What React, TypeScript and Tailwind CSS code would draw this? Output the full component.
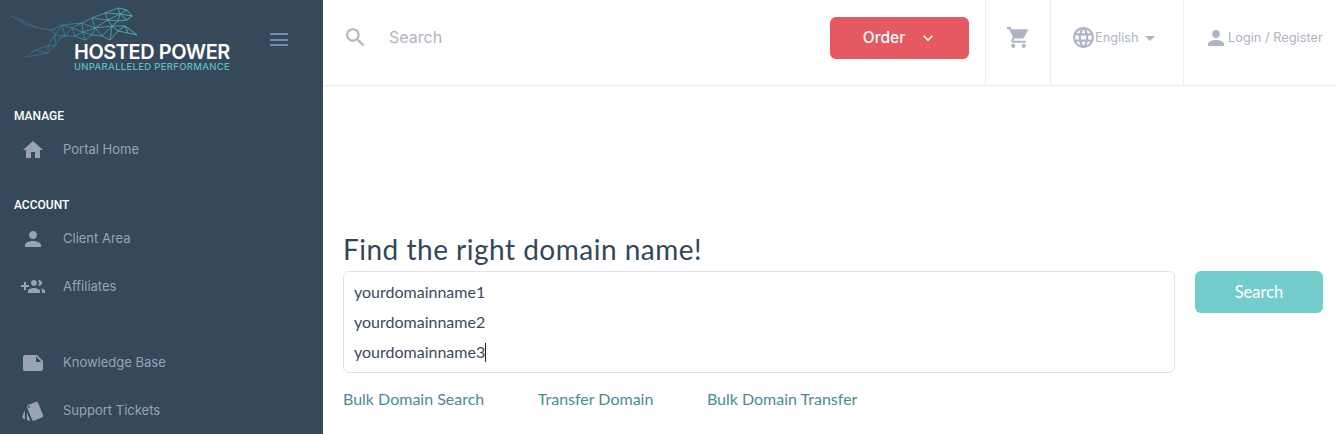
import { ReactNode } from "react";
import {
  MdHome,
  MdKeyboardArrowDown,
  MdArrowDropDown,
  MdLanguage,
  MdNote,
  MdPerson,
  MdSearch,
  MdShoppingCart,
  MdStyle,
} from "react-icons/md";

// wireframe points of the logo's cat
const nodes: [number, number][] = [
  [11, 16], [22, 20], [38, 28], [52, 30], [62, 25], [82, 23], [92, 18], [105, 13], [118, 8], [127, 10], [132, 16], [127, 20],
  [118, 21], [112, 26], [125, 26], [137, 35], [128, 33], [118, 31], [110, 40], [102, 36], [92, 35], [85, 40], [75, 36], [65, 36],
  [55, 35], [48, 46], [35, 50], [25, 57], [32, 56], [48, 53], [55, 46], [72, 28], [95, 28], [108, 20], [120, 14], [83, 32],
  [60, 38], [25, 24],
];

const links: [number, number][] = [
  [0, 1], [1, 2], [2, 3], [3, 4], [4, 5], [5, 6], [6, 7], [7, 8], [8, 9], [9, 10], [10, 11], [11, 12], [12, 13], [13, 14], [14, 15], [15, 16],
  [16, 17], [17, 18], [18, 19], [19, 20], [20, 21], [21, 22], [22, 23], [23, 24], [24, 25], [25, 26], [26, 27], [27, 28], [28, 29], [29, 30],
  [0, 37], [37, 2], [1, 37], [25, 30], [30, 36], [36, 23], [24, 30], [3, 24], [4, 24], [4, 23], [4, 31], [5, 31], [31, 23], [31, 22], [31, 35],
  [5, 35], [35, 22], [35, 21], [35, 20], [35, 32], [5, 32], [6, 32], [32, 20], [32, 19], [32, 33], [6, 33], [7, 33], [33, 13], [32, 13], [13, 19],
  [13, 18], [13, 17], [33, 12], [33, 34], [7, 34], [8, 34], [9, 34], [10, 34], [11, 34], [12, 34], [14, 17], [14, 16], [26, 29], [25, 29],
];

function GroupAddIcon() {
  return (
    <svg width="24" height="24" viewBox="0 0 24 24" fill="currentColor">
      <path d="M8 10H5V7H3v3H0v2h3v3h2v-3h3v-2zm10 1c1.66 0 2.99-1.34 2.99-3S19.66 5 18 5c-.32 0-.63.05-.91.14.57.81.9 1.79.9 2.86s-.34 2.04-.9 2.86c.28.09.59.14.91.14zm-5 0c1.66 0 2.99-1.34 2.99-3S14.66 5 13 5s-3 1.34-3 3 1.34 3 3 3zm6.62 2.16c.83.73 1.38 1.66 1.38 2.84v2h3v-2c0-1.54-2.37-2.49-4.38-2.84zM13 13c-2 0-6 1-6 3v2h12v-2c0-2-4-3-6-3z" />
    </svg>
  );
}

function Logo() {
  return (
    <div className="relative w-[231px] h-[86px] pl-[74px] pt-[42px]">
      <svg className="absolute left-0 top-0" width="150" height="62" viewBox="0 0 150 62" fill="none">
        <defs>
          <linearGradient id="cat" x1="10" y1="0" x2="135" y2="0" gradientUnits="userSpaceOnUse">
            <stop offset="0" stopColor="#3a6273" />
            <stop offset="0.5" stopColor="#3d8d97" />
            <stop offset="1" stopColor="#5cc4c6" />
          </linearGradient>
        </defs>
        <g stroke="url(#cat)" strokeWidth="0.8">
          {links.map(([a, b], i) => (
            <line key={i} x1={nodes[a][0]} y1={nodes[a][1]} x2={nodes[b][0]} y2={nodes[b][1]} />
          ))}
        </g>
      </svg>
      <div className="font-['Inter',sans-serif] text-[19.9px] leading-[20px] font-semibold text-white tracking-[-0.4px] whitespace-nowrap">
        HOSTED POWER
      </div>
      <div className="font-['Inter',sans-serif] text-[9.5px] leading-[9px] font-medium text-[#5fbcc1] tracking-[0.32px] whitespace-nowrap">
        UNPARALLELED PERFORMANCE
      </div>
    </div>
  );
}

function SideLink({ icon, label, className }: { icon: ReactNode; label: string; className: string }) {
  return (
    <div className={"flex items-center " + className}>
      <div className="w-[63px] flex justify-center pl-[2px] text-[#98a3b8] text-[24px]">{icon}</div>
      <span className="font-['Inter',sans-serif] text-[13px] text-[#98a3b8]">{label}</span>
    </div>
  );
}

function Sidebar() {
  const heading = "pl-[14px] h-[16px] box-content text-[12px] leading-[16px] font-medium text-white font-['Roboto',sans-serif]";
  return (
    <aside className="w-[323px] shrink-0 bg-[#36495a] h-[434px] overflow-hidden">
      <div className="flex items-start">
        <Logo />
        <div className="ml-[39px] mt-[33px] w-[18px] flex flex-col gap-[3.5px]">
          <div className="h-[2px] bg-[#6c90ad]" />
          <div className="h-[2px] bg-[#6c90ad]" />
          <div className="h-[2px] bg-[#6c90ad]" />
        </div>
      </div>
      <div className={heading + " pt-[22px]"}>MANAGE</div>
      <SideLink icon={<MdHome />} label="Portal Home" className="h-[48px] mt-[2px]" />
      <div className={heading + " pt-[23px]"}>ACCOUNT</div>
      <SideLink icon={<MdPerson />} label="Client Area" className="h-[48px] mt-[2px]" />
      <SideLink icon={<GroupAddIcon />} label="Affiliates" className="h-[48px]" />
      <SideLink icon={<MdNote />} label="Knowledge Base" className="h-[48px] mt-[28px]" />
      <SideLink icon={<MdStyle />} label="Support Tickets" className="h-[48px]" />
    </aside>
  );
}

function Header() {
  return (
    <header className="h-[86px] border-b border-[#ececef] flex items-stretch">
      <div className="flex-1 flex items-center pl-[20px] pb-[11px]">
        <MdSearch className="text-[#afb3c6] text-[25px]" />
        <span className="ml-[21px] font-['Inter',sans-serif] text-[16px] text-[#afb3c6]">Search</span>
      </div>
      <div className="pr-[16px] pt-[17px]">
        <div className="w-[139px] h-[42px] pl-[2px] rounded-[6px] bg-[#e55a60] flex items-center justify-center gap-[13px] text-white font-['Inter',sans-serif] text-[15.5px] font-medium">
          Order
          <MdKeyboardArrowDown className="text-[20px]" />
        </div>
      </div>
      <div className="w-[65px] border-l border-[#ececef] flex items-center justify-center pb-[10px] text-[#afb3c6] text-[25px]">
        <MdShoppingCart />
      </div>
      <div className="w-[133px] border-l border-[#ececef] flex items-center pl-[20px] pb-[10px] text-[#afb3c6]">
        <MdLanguage className="text-[25px]" />
        <span className="-ml-[1px] font-['Inter',sans-serif] text-[12.8px]">English</span>
        <MdArrowDropDown className="text-[24px] -ml-[1px]" />
      </div>
      <div className="w-[153px] border-l border-[#ececef] flex items-center pl-[20px] pb-[10px] text-[#afb3c6] whitespace-nowrap">
        <MdPerson className="text-[24px]" />
        <span className="font-['Inter',sans-serif] text-[12.8px]">Login / Register</span>
      </div>
    </header>
  );
}

export default function App() {
  return (
    <div className="flex w-[1336px] h-[434px] overflow-hidden bg-white">
      <Sidebar />
      <main className="flex-1 min-w-0">
        <Header />
        <div className="pl-[20px] pr-[13px] pt-[147px]">
          <h1 className="font-['Lato',sans-serif] text-[28px] leading-[34px] -mt-[1px] mb-[1px] text-[#33475a] tracking-[0.5px] h-[38px]">Find the right domain name!</h1>
          <div className="flex gap-[20px] items-start">
            <div className="w-[832px] h-[102px] border border-[#e1e1e8] rounded-[6px] pl-[10px] pt-[5px] font-['Lato',sans-serif] text-[16px] leading-[30px] text-[#3a4a5c]">
              <div>yourdomainname1</div>
              <div>yourdomainname2</div>
              <div className="flex items-center">
                yourdomainname3
                <span className="w-px h-[19px] bg-[#222]" />
              </div>
            </div>
            <button className="w-[128px] h-[42px] rounded-[6px] bg-[#74cccc] text-white font-['Lato',sans-serif] text-[16.5px]">Search</button>
          </div>
          <div className="flex gap-[53.5px] mt-[16px] font-['Lato',sans-serif] text-[16px] leading-[20px] text-[#4b8b95]">
            <span>Bulk Domain Search</span>
            <span>Transfer Domain</span>
            <span>Bulk Domain Transfer</span>
          </div>
        </div>
      </main>
    </div>
  );
}
